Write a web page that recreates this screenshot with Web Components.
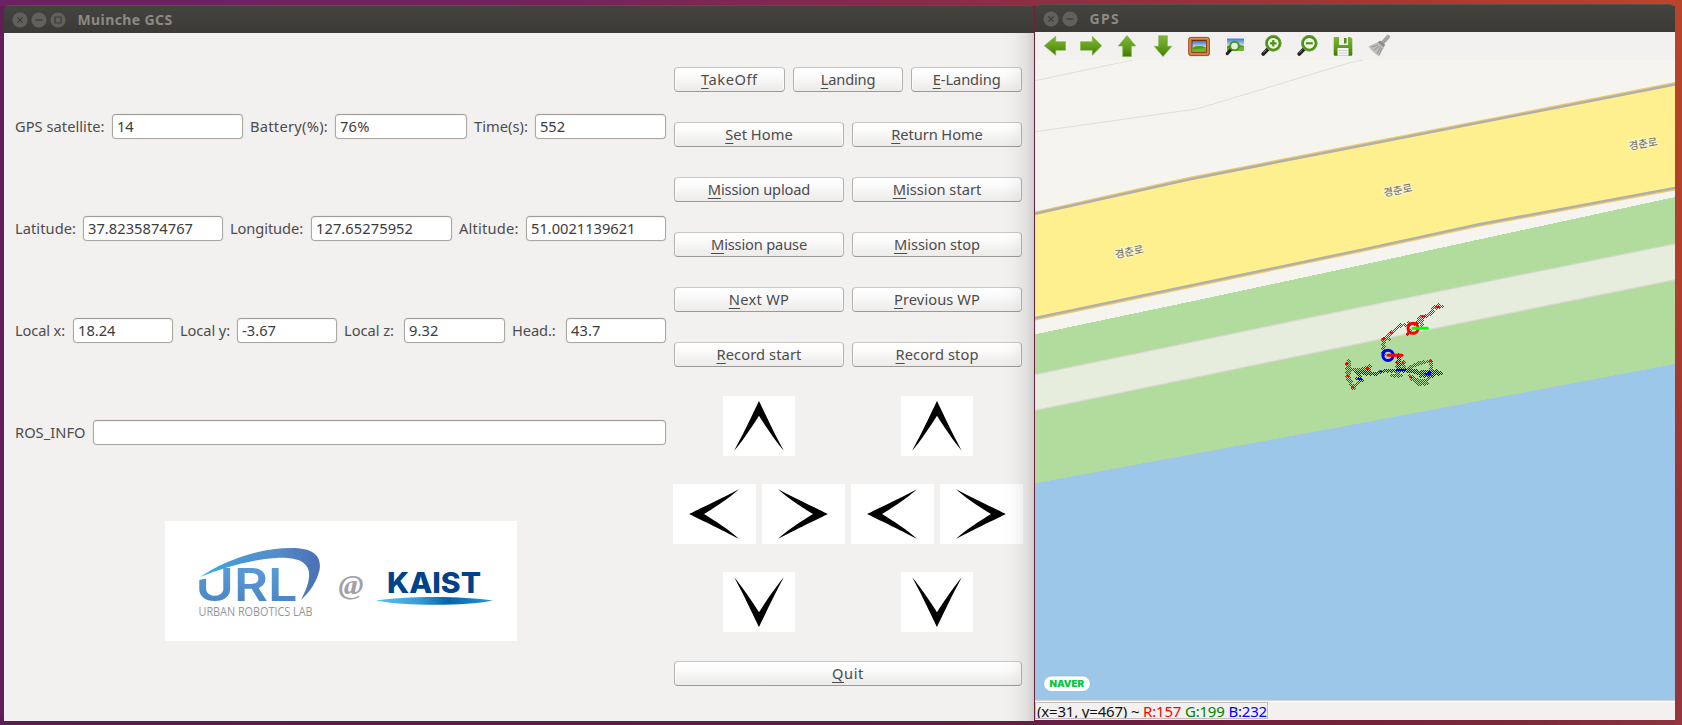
<!DOCTYPE html>
<html lang="en">
<head>
<meta charset="utf-8">
<title>Muinche GCS</title>
<style>
html,body{margin:0;height:100%;overflow:hidden}
body{font-family:"Noto Sans","Noto Sans CJK KR",sans-serif;font-size:14.67px;color:#4c4c4c}
</style>
</head>
<body>
<gcs-desktop></gcs-desktop>
<script>
function define(name, html, setup){
  customElements.define(name, class extends HTMLElement{
    connectedCallback(){
      if(this.shadowRoot) return;
      const root=this.attachShadow({mode:'open'});
      const t=document.createElement('template');
      t.innerHTML=typeof html==='function'?html(this):html;
      root.appendChild(t.content.cloneNode(true));
      if(setup) setup(this,root);
    }
  });
}

define('gcs-desktop',`
<style>
:host{display:grid;grid-template-columns:1030px 640px;column-gap:1px;align-items:start;width:1682px;height:725px;box-sizing:border-box;padding:0 7px 0 4px;
 background:
  linear-gradient(180deg,#b84429,#b03d2a 40%,#963537 70%,#96353f) right/7px 100% no-repeat,
  linear-gradient(90deg,#6a2262,#70235c 30%,#8f2d44 62%,#a83432 80%,#bd452b) top/100% 6px no-repeat,
  linear-gradient(90deg,#5c1b54,#5f1c4c 50%,#75203a 78%,#7f2a3a 92%,#8f3340) bottom/100% 8px no-repeat,
  linear-gradient(90deg,#631d57 0 50%,#6d1f3b 50%);}
gcs-window.main{height:716px;margin-top:5px}
gcs-window.gps{height:716px;margin-top:4px}
</style>
<gcs-window class="main" heading="Muinche GCS" hw="94" buttons="close,min,max" shade><gcs-panel></gcs-panel></gcs-window>
<gcs-window class="gps" heading="GPS" hw="29.5" buttons="close,min"><gcs-gps></gcs-gps></gcs-window>
`);

define('gcs-window',el=>`
<style>
:host{display:flex;flex-direction:column;position:relative}
header{height:28px;flex:none;display:flex;align-items:center;gap:3px;padding-left:7.500px;box-sizing:border-box;border-radius:6px 6px 0 0;background:linear-gradient(#45433e,#3c3b37 85%);border-top:1px solid #54524c;color:#8c8a83;font-weight:700}
svg{width:16px;height:16px;display:block}
h1{margin:0 0 0 9px;font-size:14px;line-height:24px;font-weight:700}
main{flex:1;min-height:0;background:#f2f1f0;display:flex;flex-direction:column}
:host([shade])::after{content:"";position:absolute;right:0;top:28px;bottom:0;width:32px;background:linear-gradient(90deg,rgba(0,0,0,0),rgba(0,0,0,.02) 40%,rgba(0,0,0,.07) 75%,rgba(0,0,0,.14))}
</style>
<header>${el.getAttribute('buttons').split(',').map(b=>`<svg viewBox="0 0 16 16"><circle cx="8" cy="8" r="7.6" fill="#62605a"/><path fill="none" stroke="#3b3a36" stroke-width="1.2" d="${{close:'M5.4 5.4l5.2 5.2M10.6 5.4l-5.2 5.2',min:'M4.5 8h7',max:'M5 5h6v6H5z'}[b]}"/></svg>`).join('')}<h1><fit-text w="${el.getAttribute('hw')}">${el.getAttribute('heading')}</fit-text></h1></header>
<main><slot></slot></main>`);

define('gcs-panel',`
<style>
:host{display:grid;grid-template-columns:651px 350px;column-gap:7px;padding-left:11px;flex:1}
.left{padding-top:81px;display:flex;flex-direction:column;gap:77px}
.row{display:grid;height:25px}
.r1{grid-template-columns:97px 131px 92px 132px 68px 131px}
.r2{grid-template-columns:68px 140px 88px 141px 74px 140px}
.r3{grid-template-columns:58px 100px 64px 100px 67px 101px 61px 100px}
.r4{grid-template-columns:78px 573px}
gcs-logo{align-self:flex-start;margin-left:150px;margin-top:-1px}
.right{padding-top:34px;display:flex;flex-direction:column}
.b{display:flex;gap:8px;margin:0 1px 30px;height:25px}
.b gcs-button{flex:1}
.ar{display:grid;grid-template-columns:1fr 1fr;column-gap:6px;justify-items:center;height:60px;margin-bottom:28px}
.ar.four{grid-template-columns:repeat(4,83px)}
</style>
<section class="left">
<div class="row r1">
<gcs-label w="88.5">GPS satellite:</gcs-label><gcs-input w="15.5">14</gcs-input>
<gcs-label w="77" pad>Battery(%):</gcs-label><gcs-input w="28.5">76%</gcs-input>
<gcs-label w="53" pad>Time(s):</gcs-label><gcs-input w="24">552</gcs-input></div>
<div class="row r2">
<gcs-label w="60">Latitude:</gcs-label><gcs-input w="104">37.8235874767</gcs-input>
<gcs-label w="72" pad>Longitude:</gcs-label><gcs-input w="96">127.65275952</gcs-input>
<gcs-label w="58.5" pad>Altitude:</gcs-label><gcs-input w="103.5">51.0021139621</gcs-input></div>
<div class="row r3">
<gcs-label w="49">Local x:</gcs-label><gcs-input w="36.5">18.24</gcs-input>
<gcs-label w="49" pad>Local y:</gcs-label><gcs-input w="33">-3.67</gcs-input>
<gcs-label w="49" pad>Local z:</gcs-label><gcs-input w="28.5">9.32</gcs-input>
<gcs-label w="42.5" pad>Head.:</gcs-label><gcs-input w="28.5">43.7</gcs-input></div>
<div class="row r4"><gcs-label w="69.5">ROS_INFO</gcs-label><gcs-input></gcs-input></div>
<gcs-logo></gcs-logo>
</section>
<section class="right">
<div class="b"><gcs-button w="55.5">TakeOff</gcs-button><gcs-button w="53.5">Landing</gcs-button><gcs-button w="67">E-Landing</gcs-button></div>
<div class="b"><gcs-button w="66.5">Set Home</gcs-button><gcs-button w="90.5">Return Home</gcs-button></div>
<div class="b"><gcs-button w="101.5">Mission upload</gcs-button><gcs-button w="87.5">Mission start</gcs-button></div>
<div class="b"><gcs-button w="95">Mission pause</gcs-button><gcs-button w="85">Mission stop</gcs-button></div>
<div class="b"><gcs-button w="59.5">Next WP</gcs-button><gcs-button w="85">Previous WP</gcs-button></div>
<div class="b" style="margin-bottom:29px"><gcs-button w="84">Record start</gcs-button><gcs-button w="82">Record stop</gcs-button></div>
<div class="ar"><gcs-arrow dir="up"></gcs-arrow><gcs-arrow dir="up"></gcs-arrow></div>
<div class="ar four"><gcs-arrow dir="left"></gcs-arrow><gcs-arrow dir="right"></gcs-arrow><gcs-arrow dir="left"></gcs-arrow><gcs-arrow dir="right"></gcs-arrow></div>
<div class="ar" style="margin-bottom:29px"><gcs-arrow dir="down"></gcs-arrow><gcs-arrow dir="down"></gcs-arrow></div>
<div class="b"><gcs-button w="31">Quit</gcs-button></div>
</section>`);

define('gcs-label',el=>`<style>:host{display:block;line-height:25px;white-space:nowrap}:host([pad]){padding-left:7px}</style><fit-text w="${el.getAttribute('w')}"><slot></slot></fit-text>`);

define('gcs-input',el=>`<style>:host{display:block;box-sizing:border-box;height:25px;line-height:23px;padding-left:4px;border:1px solid #aaa7a2;border-top-color:#a09d98;border-radius:4px;background:#fff;color:#3c3c3c;box-shadow:0 0 0 1px #ecebe9,inset 0 1px 0 #f4f4f3;white-space:nowrap}</style>${el.hasAttribute('w')?`<fit-text w="${el.getAttribute('w')}"><slot></slot></fit-text>`:''}`);

define('gcs-button',el=>{const s=el.textContent;return `<style>:host{display:block;box-sizing:border-box;height:25px;line-height:22px;text-align:center;border:1px solid #b4b1ae;border-top-color:#c9c7c4;border-bottom-color:#9b9895;border-radius:4px;background:linear-gradient(#fff,#fbfbfb 35%,#f1f0ef 75%,#ececeb);box-shadow:inset 1px 0 0 #fbfbfb,inset -1px 0 0 #fbfbfb;white-space:nowrap}
u{text-decoration:underline;text-decoration-thickness:1px;text-underline-offset:3px;text-decoration-skip-ink:none}</style><fit-text w="${el.getAttribute('w')}"><u>${s[0]}</u>${s.slice(1)}</fit-text>`});

define('gcs-arrow',el=>{
 const d=el.getAttribute('dir'), v=d==='up'||d==='down';
 const flip={up:'',down:'translate(0 60) scale(1 -1)',left:'',right:'translate(82 0) scale(-1 1)'}[d];
 const p=v?'M36 5C39 11 52 39 60.9 54.8C54 47 42 29.5 36 19.7C30 29.5 18 47 11.1 54.8C20 39 33 11 36 5Z'
          :'M16.2 30C22 27 50 13.6 65.9 5.2C58.5 12.5 41 24 31 30C41 36 58.5 47.5 65.9 54.8C50 46.4 22 33 16.2 30Z';
 return `<style>:host{display:block;width:${v?72:83}px;height:60px;background:#fff}svg{display:block}</style><svg width="${v?72:83}" height="60"><path transform="${flip}" d="${p}"/></svg>`});

define('gcs-logo',`
<style>:host{display:block;width:352px;height:120px;background:#fff}svg{display:block}</style>
<svg width="352" height="120" viewBox="0 0 352 120">
<defs>
<linearGradient id="s" x1="0" x2="1"><stop offset="0" stop-color="#38b0e4"/><stop offset=".3" stop-color="#4a98d4"/><stop offset=".65" stop-color="#558bca"/><stop offset="1" stop-color="#4a70b4"/></linearGradient>
<linearGradient id="u" x1="0" y1="0" x2="0" y2="1"><stop offset="0" stop-color="#5aa2dc"/><stop offset="1" stop-color="#4b7fc0"/></linearGradient>
<linearGradient id="k" x1="0" x2="1"><stop offset="0" stop-color="#5cc4ea"/><stop offset=".35" stop-color="#3a9fd8"/><stop offset=".62" stop-color="#0064ac"/><stop offset="1" stop-color="#2c9ad6"/></linearGradient>
</defs>
<text x="30.500" y="80" font-family="Inter,sans-serif" font-size="45" font-weight="600" textLength="102" lengthAdjust="spacingAndGlyphs" fill="url(#u)">URL</text>
<path fill="#fff" d="M28 42H45V57L28 60Z"/>
<path fill="url(#s)" d="M35 56C62 38 96 27 127 27C148 27 157 35 154.500 49C152 60 145 71 136 79C141 69 145 60 144 51C142 39 128 36 111 37C83 39 58 47 35 56Z"/>
<text x="33.500" y="95" font-family="'Open Sans',sans-serif" font-size="12.400" textLength="114" lengthAdjust="spacingAndGlyphs" fill="#94969a">URBAN ROBOTICS LAB</text>
<text x="173.500" y="73" font-family="'Liberation Serif',serif" font-style="italic" font-weight="700" font-size="27" textLength="25" lengthAdjust="spacingAndGlyphs" fill="#a0a0a6">@</text>
<text x="222" y="71.500" font-family="Inter,sans-serif" font-weight="800" font-size="28.500" textLength="94" lengthAdjust="spacingAndGlyphs" fill="#00428c">KAIST</text>
<path fill="url(#k)" d="M211 79.500C240 74.700 298 74.700 328 79.500C300 85.300 240 85.300 211 79.500Z"/>
</svg>`);

define('gcs-gps',`
<style>
:host{display:flex;flex-direction:column;flex:1}
nav{height:28px;flex:none;display:flex;gap:12px;align-items:center;padding-left:8px;background:#f2f1f0}
footer{flex:1;background:#f2f1f0;border-top:1px solid #d8d6d4;box-shadow:inset 0 1px #fbfbfa;display:flex;align-items:flex-start;padding-top:1px;color:#111}
.st{box-sizing:border-box;height:17px;width:233px;border:1px solid #c0bdba;overflow:hidden;padding-left:1px;line-height:17px;font-size:15px;white-space:pre}
</style>
<nav>${['left','right','up','down','picture','find','zoomin','zoomout','save','brush'].map(n=>`<gcs-icon name="${n}"></gcs-icon>`).join('')}</nav>
<gcs-map></gcs-map>
<footer><div class="st"><fit-text w="229">(x=31, y=467) ~ <span style="color:#f00">R:157</span> <span style="color:#008000">G:199</span> <span style="color:#00f">B:232</span></fit-text></div></footer>`);

const lens=inner=>`<path d="M9.500 14.500L4.200 20" stroke="#222" stroke-width="3.800" stroke-linecap="round"/><path d="M7.500 15.500L4.500 18.700" stroke="#888" stroke-width="1"/><circle cx="14.300" cy="9.300" r="6.800" fill="#f4fbee" stroke="#4b8d16" stroke-width="2.800"/><circle cx="14.300" cy="9.300" r="7.700" fill="none" stroke="#76b33a" stroke-width=".7"/><path d="${inner}" stroke="#4e9414" stroke-width="2.200"/>`;
const scene=(x,y,w,h)=>`<rect x="${x}" y="${y}" width="${w}" height="${h}" fill="url(#sky)"/><path d="M${x} ${y+h*.6}Q${x+w*.5} ${y+h*.35} ${x+w} ${y+h*.6}V${y+h}H${x}Z" fill="#4b9a12"/><path d="M${x} ${y+h*.8}L${x+w} ${y+h*.65}V${y+h}H${x}Z" fill="#6eb52a"/>`;
const ICONS={
 left:'<path class="a" d="M1.300 11.700L12.700 2.300V7.700H22.500V16.200H12.700V21.200Z"/>',
 right:'<path class="a" d="M22.700 11.700L13.300 2.300V7.700H1.500V16.200H13.300V21.200Z"/>',
 up:'<path class="a" d="M12 1.500L20.800 12H16.400V22.600H7.700V12H3.200Z"/>',
 down:'<path class="a" d="M12 22.600L20.800 12.300H16.400V1.700H7.700V12.300H3.200Z"/>',
 picture:'<rect x="1.700" y="3.400" width="20.700" height="18.200" rx="2" fill="#c8692c" stroke="#9c4a18"/><rect x="3" y="4.600" width="18" height="15.500" rx="1" fill="none" stroke="#e69a5c"/><rect x="4.700" y="6" width="15" height="12.600" fill="#6b3410"/>'+scene(5.5,7,13.5,10.7),
 find:'<rect x="2.700" y="3" width="19.600" height="16" rx="1" fill="#fff" stroke="#ddd" stroke-width=".6"/>'+scene(4,4.5,17,12.5)+'<path d="M8 15.500L4.300 19.500" stroke="#222" stroke-width="3.200" stroke-linecap="round"/><circle cx="11.500" cy="12" r="4.300" fill="#e6f2df" stroke="#4e9414" stroke-width="1.900"/>',
 zoomin:lens('M11 9.300H17.600M14.300 6V12.600'),
 zoomout:lens('M10.800 9.300H17.800'),
 save:'<path d="M3.500 3H19.500L21.300 5V20.500Q21.300 21.700 20 21.700H4Q2.700 21.700 2.700 20.500V4Q2.700 3 3.500 3Z" fill="url(#g)"/><rect x="8" y="3" width="9" height="8" fill="#eef0ec"/><rect x="13" y="4" width="2.500" height="5.500" fill="#4b8d16"/><rect x="6.500" y="14" width="11" height="7.700" fill="#f6f6f6"/><path d="M8 16.500H16M8 19H16" stroke="#ccc"/>',
 brush:'<path d="M21 2.800L15.500 9" stroke="#a5a5a5" stroke-width="4" stroke-linecap="round"/><path d="M13.300 6.500L18.200 11L16.500 13.500L10.500 8.500Z" fill="#8a8a8a"/><path d="M10.500 8.200L16.800 13.700L12 22.600Q5 17.500 1.300 12.400Z" fill="#bdbdbd"/><path d="M11 11L4.500 13M12.500 12L7 16M14 13L10 19.500M15 14L12 21" stroke="#888" stroke-width=".8"/>'
};
define('gcs-icon',el=>`<style>:host{display:block;width:24px;height:24px}svg{display:block}.a{fill:url(#g);stroke:#79b53c;stroke-width:.6}</style><svg width="24" height="24" fill="none"><defs><linearGradient id="g" x1="0" y1="0" x2="0" y2="1"><stop offset="0" stop-color="#7eb536"/><stop offset=".5" stop-color="#65a01c"/><stop offset="1" stop-color="#457a08"/></linearGradient><linearGradient id="sky" x1="0" y1="0" x2="0" y2="1"><stop offset="0" stop-color="#3978c8"/><stop offset=".6" stop-color="#cfe5fa"/></linearGradient></defs>${ICONS[el.getAttribute('name')]}</svg>`);

/* Flight tracks: every position sample is a small hollow diamond on the pixel grid.
   Points are in thirds of a pixel, relative to the top left of the track area. */
function track(lines){
  const px=new Set(); let k=0;
  for(const line of lines){
    for(let i=1;i<line.length;i++){
      const [x0,y0]=line[i-1],[x1,y1]=line[i];
      const n=Math.max(1,Math.round(Math.hypot(x1-x0,y1-y0)/4));
      for(let j=0;j<=n;j++){
        k++;
        const w=k%3===0?1:0, f=j/n, steep=Math.abs(y1-y0)>Math.abs(x1-x0);
        let x=Math.floor((x0+(x1-x0)*f)/3)+(steep?w:0), y=Math.floor((y0+(y1-y0)*f)/3)+(steep?0:w);
        if((x+y)%2&&k%31) x++;
        [[0,-1],[1,0],[0,1],[-1,0]].forEach(([a,b])=>px.add((x+a)+' '+(y+b)));
      }
    }
  }
  return [...px].map(p=>'M'+p+'h1v1h-1z').join('');
}
const RED=track([
 [[334,50],[312,50],[298,74],[270,80],[258,100],[212,104],[180,128],[157,148],[157,192]],
 [[157,148],[176,146]],[[270,82],[272,106]],[[322,44],[318,56]],[[228,134],[240,120]],[[262,104],[235,98]],
 [[54,212],[54,270]],[[48,216],[48,268]],[[56,238],[116,238]],[[113,226],[113,246]],[[90,236],[118,230]],[[58,270],[67,294],[84,274]],[[84,248],[134,250]],
 [[198,214],[200,250]],[[216,214],[216,240]],[[184,256],[210,256]],[[232,234],[258,220],[300,212],[302,254],[286,272],[264,270],[236,254]],[[292,280],[264,280],[244,264]]
]);
const BLUE=track([
 [[78,248],[140,250],[160,242],[236,240],[262,248],[300,252],[334,246]],[[222,238],[270,244],[310,246]],
 [[80,266],[98,268]],[[84,252],[84,272]],[[90,244],[120,244]],[[206,194],[206,240]],[[202,206],[202,240]],[[270,256],[308,258]],[[318,242],[326,252]]
]);

define('gcs-map',`
<style>
:host{display:block;height:640px;flex:none}
svg{display:block}
.n{font-size:10.500px;font-weight:500;font-family:"Noto Sans CJK KR",sans-serif;fill:#7d7d6e;stroke:#fbf6d2;stroke-width:2px;paint-order:stroke;text-anchor:middle}
</style>
<svg width="640" height="640" viewBox="0 0 640 640">
<rect width="640" height="640" fill="#f5f4ef"/>
<path d="M0 20.700L98 0M0 71.700L161.700 49L315 2.700L328 0" fill="none" stroke="#dfded8"/>
<path d="M0 153.700L155 119L325 85.700L640 24.300V128.300L443 164.700L325 190.300L0 258.300Z" fill="#fff08f"/>
<path d="M0 152.300L155 117.600L325 84.300L640 22.900M0 259.700L325 191.700L443 166.100L640 129.700" fill="none" stroke="#efcb6a" stroke-width="1.600"/>
<path d="M0 153.900L155 119.200L325 85.900L640 24.500M0 258.100L325 190.100L443 164.500L640 128.100" fill="none" stroke="#b1afaa" stroke-width="2.500"/>
<path d="M0 274.300L155 241.700L325 205.300L640 137V304L325 363.300L0 423.300Z" fill="#b2dc9d" shape-rendering="crispEdges"/>
<path d="M0 314.700L325 247.300L640 184V219.700L325 283.300L0 350.300Z" fill="#e6eddd"/>
<path d="M0 314.700L325 247.300L640 184M0 350.300L325 283.300L640 219.700" fill="none" stroke="#dcd8d4" stroke-width="1.200"/>
<path d="M0 423.300L325 363.300L640 304V640H0Z" fill="#9dc7e8" shape-rendering="crispEdges"/>
<text class="n" transform="translate(95 195.500) rotate(-12)">경춘로</text>
<text class="n" transform="translate(363.500 134) rotate(-11)">경춘로</text>
<text class="n" transform="translate(608.800 87.500) rotate(-10)">경춘로</text>
<g transform="translate(295 230)" shape-rendering="crispEdges"><path fill="red" d="${RED}"/><path fill="#00f" d="${BLUE}"/></g>
<g transform="translate(295 230) scale(.33333333)">
<path d="M316 51h14M272 79h14M50 258h8M63 292h9M180 128h8M154 148h7M238 262h8M297 212h9M297 254h9M198 218h7M215 218h7" stroke="red" stroke-width="6"/>
<path d="M82 267h14M148 244h8M198 240h30M284 253h18M203 192v12" stroke="#00f" stroke-width="6"/>
<circle cx="249" cy="115" r="15" fill="none" stroke="red" stroke-width="9"/>
<path d="M249 115H292" stroke="#0f0" stroke-width="9" stroke-linecap="round"/>
<circle cx="174" cy="196" r="15.500" fill="none" stroke="#00f" stroke-width="9"/>
<path d="M174 196H216" stroke="red" stroke-width="9" stroke-linecap="round"/>
</g>
<rect x="8.700" y="616" width="46.600" height="15.500" rx="7.700" fill="#fff" stroke="#87aecd" stroke-width=".6"/>
<text x="14.500" y="627" font-family="Inter,sans-serif" font-weight="900" font-size="9.300" textLength="34.500" lengthAdjust="spacingAndGlyphs" fill="#04c73c">NAVER</text>
</svg>`);

/* Inline text whose tracking is adjusted so the run takes the width given in "w". */
define('fit-text',`<style>:host{display:inline-block;white-space:pre}span{display:inline-block}</style><span><slot></slot></span>`,(el,root)=>{
  const s=root.querySelector('span'), w=parseFloat(el.getAttribute('w'));
  let n=el.textContent.length;
  const sl=el.querySelector('slot');
  if(sl) n=sl.assignedNodes({flatten:true}).reduce((a,x)=>a+x.textContent.length,0);
  const nat=s.getBoundingClientRect().width;
  if(n&&nat) s.style.letterSpacing=((w+1-nat)/n).toFixed(3)+'px';
});
</script>
</body>
</html>
